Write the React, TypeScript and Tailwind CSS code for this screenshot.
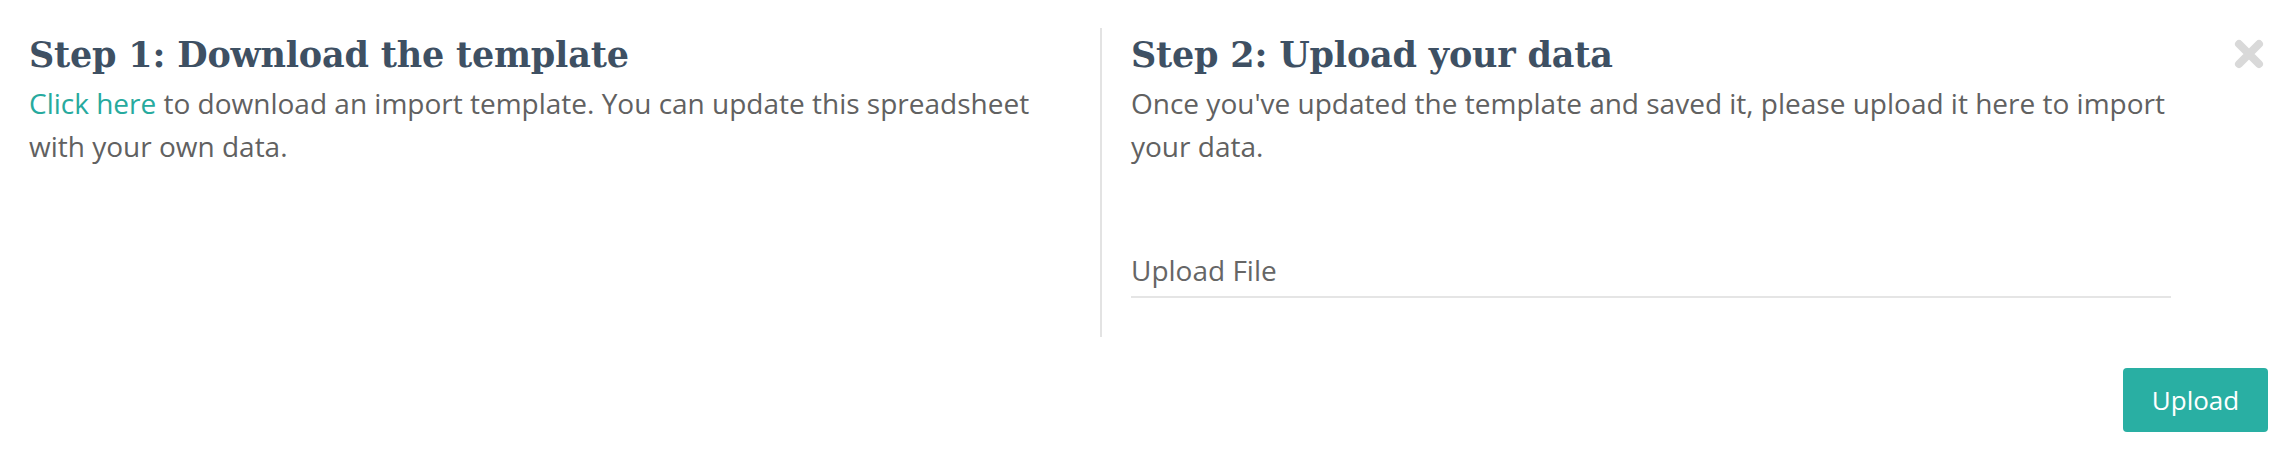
import React from 'react';

const SLAB = { fontFamily: '"DejaVu Serif", "Liberation Serif", serif' };

const CloseIcon = () => (
  <svg viewBox="0 0 32 32" className="w-[32px] h-[32px]" fill="none">
    <path d="M6 6 L26 26 M26 6 L6 26" stroke="#d9d9d9" strokeWidth="8" strokeLinecap="round" />
  </svg>
);

export default function App() {
  return (
    <div className="relative w-[2296px] h-[460px] bg-white px-[29px] pt-[28px] font-['Open_Sans',sans-serif]">
      {/* close button */}
      <button className="absolute top-[38px] right-[31px]">
        <CloseIcon />
      </button>

      <div className="flex">
        {/* Step 1 */}
        <div className="w-[1071px] pr-[30px]">
          <h2 style={SLAB} className="text-[35px] leading-[54px] text-[#3e5063] font-bold tracking-[-0.2px]">
            Step 1: Download the template
          </h2>
          <p className="text-[28px] leading-[43px] text-[#616161]">
            <a className="text-[#27aa9e]">Click here</a> to download an import template. You can update this spreadsheet with your own data.
          </p>
        </div>

        {/* Step 2 */}
        <div className="w-[1071px] border-l-2 border-[#e3e3e3] pl-[29px] h-[309px]">
          <h2 style={SLAB} className="text-[35px] leading-[54px] text-[#3e5063] font-bold tracking-[-0.2px]">
            Step 2: Upload your data
          </h2>
          <p className="text-[28px] leading-[43px] text-[#616161]">
            Once you've updated the template and saved it, please upload it here to import your data.
          </p>
          <div className="mt-[84px] border-b-2 border-[#e5e5e5] pb-[8px]">
            <span className="text-[28px] leading-[36px] text-[#666666]">Upload File</span>
          </div>
        </div>
      </div>

      <div className="flex justify-end mt-[31px] -mr-[1px]">
        <button className="w-[145px] h-[64px] rounded-[4px] bg-[#29afa3] text-white text-[26px] font-medium">
          Upload
        </button>
      </div>
    </div>
  );
}
